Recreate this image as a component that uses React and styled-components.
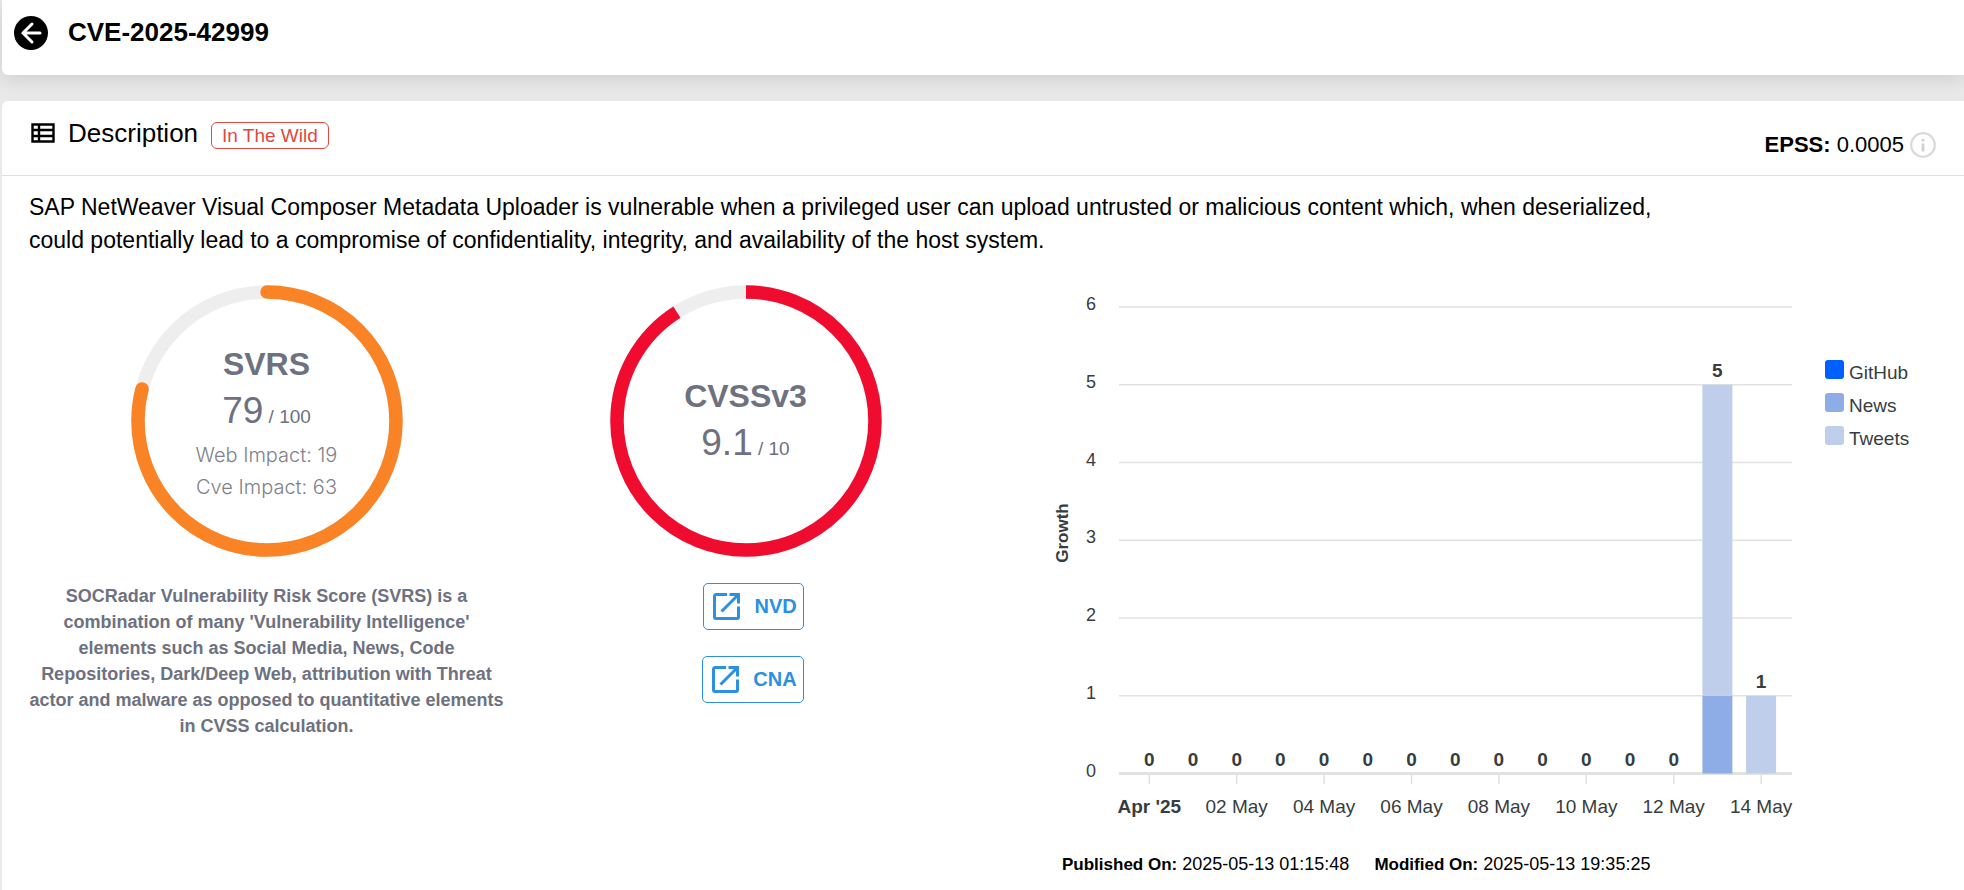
import React from "react";
import styled, { createGlobalStyle } from "styled-components";

const GlobalStyle = createGlobalStyle`
  * {
    box-sizing: border-box;
  }
  body {
    margin: 0;
    background: #e9e9e9;
    color: #000;
    font-family: "Liberation Sans", Arial, sans-serif;
  }
  h1, h2, h3, p, ul {
    margin: 0;
    padding: 0;
  }
`;

const Page = styled.div`
  min-height: 100vh;
  display: flex;
  flex-direction: column;
  gap: 26px;
  padding-left: 2px;
`;

const TopBar = styled.header`
  height: 75px;
  display: flex;
  align-items: flex-start;
  gap: 20px;
  padding: 16px 12px;
  background: #fff;
  border-radius: 0 0 0 6px;
  box-shadow: 0 4px 20px rgba(0, 0, 0, 0.12);
`;

const BackButton = styled.button`
  display: flex;
  padding: 0;
  border: 0;
  background: none;
  cursor: pointer;
`;

const Title = styled.h1`
  font-size: 26px;
  line-height: 32px;
`;

const Card = styled.main`
  flex: 1;
  background: #fff;
  border-radius: 6px 0 0 0;
`;

const CardHead = styled.div`
  height: 75px;
  display: flex;
  justify-content: space-between;
  align-items: flex-start;
  padding: 16px 28px 0 29px;
  border-bottom: 1px solid #dedede;
`;

const HeadLeft = styled.div`
  display: flex;
  align-items: center;
  gap: 13px;
`;

const SectionTitle = styled.h2`
  font-size: 26px;
  font-weight: 400;
  line-height: 32px;
`;

const Badge = styled.span`
  margin-top: 4px;
  padding: 0 10px;
  border: 1px solid #dc4a41;
  border-radius: 6px;
  color: #e0483e;
  font-size: 19px;
  line-height: 25px;
`;

const Epss = styled.p`
  display: flex;
  align-items: center;
  gap: 6px;
  padding-top: 14px;
  font-size: 22px;
  line-height: 28px;
`;

const Summary = styled.p`
  width: 85%;
  padding: 15px 0 0 27px;
  font-size: 23px;
  line-height: 33px;
`;

const Columns = styled.div`
  display: grid;
  grid-template-columns: 479fr 479fr 979fr;
  padding: 28px 0 14px 25px;
`;

const ScoreColumn = styled.section`
  display: flex;
  flex-direction: column;
  align-items: center;
  gap: 26px;
`;

const Dial = styled.div`
  display: grid;
  place-items: center;

  & > * {
    grid-area: 1 / 1;
  }
`;

const DialText = styled.div`
  text-align: center;
  color: #6d7180;
`;

const DialTitle = styled.h3`
  font-size: 32px;
  line-height: 50px;
`;

const DialValue = styled.p`
  font-size: 37px;
  line-height: 44px;

  small {
    font-size: 19px;
  }
`;

const DialNote = styled.p`
  color: #808289;
  font-family: Inter, "Liberation Sans", sans-serif;
  font-size: 20px;
  font-weight: 300;
  line-height: 32px;
`;

const ScoreInfo = styled.p`
  color: #6d7180;
  font-size: 18px;
  font-weight: 700;
  line-height: 26px;
  text-align: center;
`;

const SourceLinks = styled.nav`
  display: flex;
  flex-direction: column;
  align-items: flex-end;
  gap: 26px;
  padding-left: 15px;
`;

const SourceLink = styled.a`
  height: 47px;
  display: flex;
  align-items: center;
  gap: 14px;
  padding: 0 6px 0 9px;
  border: 1px solid #2b90e3;
  border-radius: 5px;
  color: #2b90e3;
  font-size: 20px;
  font-weight: 700;
  text-decoration: none;
`;

const ChartColumn = styled.section`
  padding-left: 60px;
`;

const ChartRow = styled.div`
  display: flex;
  align-items: flex-start;
  gap: 20px;
`;

const Chart = styled.svg`
  flex: 1;
  min-width: 0;
  display: block;
  fill: #373d3f;
  font-size: 19px;
`;

const Legend = styled.ul`
  flex: 0 0 139px;
  margin-top: 71px;
  list-style: none;
`;

const LegendItem = styled.li`
  display: flex;
  align-items: center;
  gap: 5px;
  color: #373d3f;
  font-size: 19px;
  line-height: 33px;

  &::before {
    content: "";
    width: 19px;
    height: 19px;
    margin-bottom: 6px;
    border-radius: 3px;
    background: ${({ $color }) => $color};
  }
`;

const Dates = styled.div`
  display: flex;
  gap: 25px;
  padding: 17px 0 0 17px;
  font-size: 18px;
  line-height: 24px;

  b {
    font-size: 17px;
  }
`;

const series = [
  { name: "GitHub", color: "#0060ff" },
  { name: "News", color: "#8eade6" },
  { name: "Tweets", color: "#bfceeb" },
];

// one entry per day: [GitHub, News, Tweets]
const days = [
  ...Array.from({ length: 13 }, () => [0, 0, 0]),
  [0, 1, 4],
  [0, 0, 1],
];

const dayLabels = [
  "Apr '25",
  "02 May",
  "04 May",
  "06 May",
  "08 May",
  "10 May",
  "12 May",
  "14 May",
];

const BackIcon = () => (
  <svg width="34" height="34" viewBox="0 0 34 34" aria-hidden="true">
    <circle cx="17" cy="17" r="17" fill="#000" />
    <path
      d="M18 8 9 17l9 9M9 17H26"
      fill="none"
      stroke="#fff"
      strokeWidth="3"
      strokeLinecap="round"
    />
  </svg>
);

const ListIcon = () => (
  <svg width="24" height="20" viewBox="0 0 24 20" aria-hidden="true">
    <path
      d="M1.5 1.5h21v17h-21zM8 1v18M1 7h22M1 13h22"
      fill="none"
      stroke="#000"
      strokeWidth="2.4"
    />
  </svg>
);

const InfoIcon = () => (
  <svg width="26" height="26" viewBox="0 0 26 26" aria-hidden="true">
    <circle cx="13" cy="13" r="11.8" fill="none" stroke="#d8d9da" strokeWidth="2.2" />
    <path d="M11.6 7h2.8v2.6h-2.8zM11.6 11.4h2.8v8h-2.8z" fill="#d0d1d2" />
  </svg>
);

const OpenIcon = () => (
  <svg width="27" height="27" viewBox="0 0 27 27" aria-hidden="true">
    <g fill="none" stroke="currentColor" strokeWidth="3">
      <path d="M14 1.5H3A1.5 1.5 0 0 0 1.5 3v21A1.5 1.5 0 0 0 3 25.5h21a1.5 1.5 0 0 0 1.5-1.5V13.5" />
      <path d="M16.5 1.5h9v9M8.5 18.5 25 2" />
    </g>
  </svg>
);

const Gauge = ({ percent, color, round, children }) => (
  <Dial>
    <svg width="272" height="272" viewBox="0 0 272 272" aria-hidden="true">
      <g fill="none" strokeWidth="13.5" transform="rotate(-90 136 136)">
        <circle cx="136" cy="136" r="129" stroke="#eee" />
        <circle
          cx="136"
          cy="136"
          r="129"
          stroke={color}
          pathLength="100"
          strokeDasharray={`${percent} 100`}
          strokeLinecap={round ? "round" : "butt"}
        />
      </g>
    </svg>
    <DialText>{children}</DialText>
  </Dial>
);

const GrowthChart = () => {
  const left = 74;
  const right = 747;
  const base = 488.5;
  const unit = 77.75;
  const barWidth = 30;
  const xOf = (i) => 104.3 + i * 43.7;

  return (
    <Chart viewBox="0 0 760 550" role="img" aria-label="Growth">
      {[0, 1, 2, 3, 4, 5, 6].map((n) => (
        <g key={n}>
          <path
            d={`M${left} ${base - n * unit}H${right}`}
            stroke="#e2e2e2"
            strokeWidth={n ? 1.5 : 3}
          />
          <text x="46" y={base + 3 - n * unit} fontSize="18" textAnchor="middle">
            {n}
          </text>
        </g>
      ))}
      <text
        transform="translate(23 248) rotate(-90)"
        fontSize="17"
        fontWeight="700"
        textAnchor="middle"
      >
        Growth
      </text>
      {days.map((values, i) => {
        const total = values.reduce((a, b) => a + b, 0);
        let top = base;
        return (
          <g key={i}>
            {values.map((v, s) => {
              top -= v * unit;
              return v ? (
                <rect
                  key={s}
                  x={xOf(i) - barWidth / 2}
                  y={top}
                  width={barWidth}
                  height={v * unit}
                  fill={series[s].color}
                />
              ) : null;
            })}
            <text x={xOf(i)} y={top - 8} fontWeight="700" textAnchor="middle">
              {total}
            </text>
          </g>
        );
      })}
      {dayLabels.map((label, i) => (
        <g key={label}>
          <path d={`M${xOf(i * 2)} 490v9`} stroke="#e0e0e0" strokeWidth="1.5" />
          <text
            x={xOf(i * 2)}
            y="528"
            fontWeight={i ? 400 : 700}
            textAnchor="middle"
          >
            {label}
          </text>
        </g>
      ))}
    </Chart>
  );
};

const App = () => {
  return (
    <>
      <GlobalStyle />
      <Page>
        <TopBar>
          <BackButton type="button" aria-label="Back">
            <BackIcon />
          </BackButton>
          <Title>CVE-2025-42999</Title>
        </TopBar>

        <Card>
          <CardHead>
            <HeadLeft>
              <ListIcon />
              <SectionTitle>Description</SectionTitle>
              <Badge>In The Wild</Badge>
            </HeadLeft>
            <Epss>
              <span>
                <b>EPSS:</b> 0.0005
              </span>
              <InfoIcon />
            </Epss>
          </CardHead>

          <Summary>
            SAP NetWeaver Visual Composer Metadata Uploader is vulnerable when a
            privileged user can upload untrusted or malicious content which,
            when deserialized, could potentially lead to a compromise of
            confidentiality, integrity, and availability of the host system.
          </Summary>

          <Columns>
            <ScoreColumn>
              <Gauge percent={79} color="#f98325" round>
                <DialTitle>SVRS</DialTitle>
                <DialValue>
                  79<small> / 100</small>
                </DialValue>
                <DialNote>Web Impact: 19</DialNote>
                <DialNote>Cve Impact: 63</DialNote>
              </Gauge>
              <ScoreInfo>
                SOCRadar Vulnerability Risk Score (SVRS) is a combination of
                many 'Vulnerability Intelligence' elements such as Social Media,
                News, Code Repositories, Dark/Deep Web, attribution with Threat
                actor and malware as opposed to quantitative elements in CVSS
                calculation.
              </ScoreInfo>
            </ScoreColumn>

            <ScoreColumn>
              <Gauge percent={91} color="#f00c2e">
                <DialTitle>CVSSv3</DialTitle>
                <DialValue>
                  9.1<small> / 10</small>
                </DialValue>
              </Gauge>
              <SourceLinks>
                <SourceLink href="#nvd">
                  <OpenIcon />
                  NVD
                </SourceLink>
                <SourceLink href="#cna">
                  <OpenIcon />
                  CNA
                </SourceLink>
              </SourceLinks>
            </ScoreColumn>

            <ChartColumn>
              <ChartRow>
                <GrowthChart />
                <Legend>
                  {series.map(({ name, color }) => (
                    <LegendItem key={name} $color={color}>
                      {name}
                    </LegendItem>
                  ))}
                </Legend>
              </ChartRow>
              <Dates>
                <p>
                  <b>Published On:</b> 2025-05-13 01:15:48
                </p>
                <p>
                  <b>Modified On:</b> 2025-05-13 19:35:25
                </p>
              </Dates>
            </ChartColumn>
          </Columns>
        </Card>
      </Page>
    </>
  );
};

export default App;
